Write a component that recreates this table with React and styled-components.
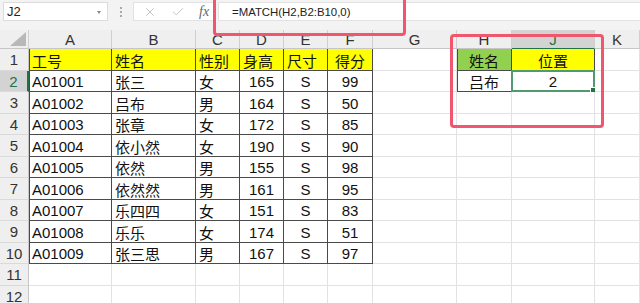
import React from "react";
import styled, { createGlobalStyle } from "styled-components";
import { X, Check } from "lucide-react";

const GlobalStyle = createGlobalStyle`
  body {
    margin: 0;
    background: #fff;
    overflow: hidden;
    font-family: "Liberation Sans", "Noto Sans CJK SC", sans-serif;
  }
`;

const cols = ["A", "B", "C", "D", "E", "F", "G", "H", "J", "K"];

const rows = [
  ["A01001", "张三", "女", "165", "S", "99"],
  ["A01002", "吕布", "男", "164", "S", "50"],
  ["A01003", "张章", "女", "172", "S", "85"],
  ["A01004", "依小然", "女", "190", "S", "90"],
  ["A01005", "依然", "男", "155", "S", "98"],
  ["A01006", "依然然", "男", "161", "S", "95"],
  ["A01007", "乐四四", "女", "151", "S", "83"],
  ["A01008", "乐乐", "女", "174", "S", "51"],
  ["A01009", "张三思", "男", "167", "S", "97"],
];

const head = ["工号", "姓名", "性别", "身高", "尺寸", "得分"];

const Page = styled.div`
  position: relative;
  width: 640px;
  height: 303px;
  overflow: hidden;
`;

const Toolbar = styled.div`
  display: flex;
  align-items: flex-start;
  height: 30px;
  box-sizing: border-box;
  padding: 2px 0 0 3px;
  background: #f3f3f3;
`;

const NameBox = styled.div`
  position: relative;
  width: 105px;
  height: 19px;
  box-sizing: border-box;
  border: 1px solid #dcdcdc;
  background: #fff;
  font-size: 13px;
  color: #222;
  padding-left: 3px;
  line-height: 17px;
  &::after {
    content: "";
    position: absolute;
    right: 6px;
    top: 8px;
    border: 2.5px solid transparent;
    border-top: 3px solid #888;
  }
`;

const Grip = styled.div`
  width: 25px;
  height: 19px;
  display: flex;
  flex-direction: column;
  align-items: center;
  justify-content: center;
  gap: 2px;
  span {
    width: 2px;
    height: 2px;
    background: #aaa;
  }
`;

const FxControls = styled.div`
  display: flex;
  align-items: center;
  width: 82px;
  height: 19px;
  box-sizing: border-box;
  background: #fff;
  border: 1px solid #e2e2e2;
  padding-left: 9px;
  gap: 14px;
  color: #b4b4b4;
`;

const Fx = styled.span`
  font-family: "Liberation Serif", serif;
  font-style: italic;
  font-size: 14px;
  color: #666;
`;

const Formula = styled.div`
  flex: 1;
  height: 19px;
  margin-left: 3px;
  box-sizing: border-box;
  background: #fff;
  border: 1px solid #e2e2e2;
  border-right: none;
  padding-left: 13px;
  font-size: 11.4px;
  line-height: 18px;
  color: #222;
`;

const Sheet = styled.div`
  display: grid;
  grid-template-columns: 29px 83px 84px 44px 44px 44px 45px 84px 55px 83px 1fr;
  grid-template-rows: 19px repeat(12, 21.5px);
`;

const Corner = styled.div`
  background: #efefef;
  border-right: 1px solid #d0d0d0;
  border-bottom: 1px solid #c6c6c6;
  display: flex;
  align-items: flex-end;
  justify-content: flex-end;
  padding: 0 2px 2px 0;
`;

const ColHead = styled.div`
  display: flex;
  align-items: center;
  justify-content: center;
  font-size: 15px;
  color: ${(p) => (p.$active ? "#217346" : "#333")};
  background: ${(p) => (p.$active ? "#d3d3d3" : "#efefef")};
  border-right: 1px solid #d0d0d0;
  border-bottom: 1px solid ${(p) => (p.$active ? "#217346" : "#c6c6c6")};
`;

const RowHead = styled.div`
  display: flex;
  align-items: center;
  justify-content: center;
  padding-top: 1px;
  font-size: 15px;
  color: ${(p) => (p.$active ? "#217346" : "#333")};
  background: ${(p) => (p.$active ? "#d3d3d3" : "#efefef")};
  border-right: ${(p) => (p.$active ? "2px solid #217346" : "1px solid #c6c6c6")};
  border-bottom: 1px solid #dadada;
`;

const Cell = styled.div`
  position: relative;
  display: flex;
  align-items: center;
  justify-content: ${(p) => (p.$center ? "center" : "flex-start")};
  padding: 2px 3px 0;
  white-space: nowrap;
  font-size: 15px;
  color: #111;
  background: ${(p) => p.$bg || "#fff"};
  border-right: 1px solid ${(p) => (p.$dark ? "#4a4a4a" : "#e2e2e2")};
  border-bottom: 1px solid ${(p) => (p.$dark ? "#4a4a4a" : "#e2e2e2")};
  box-shadow: ${(p) => (p.$edge ? "inset 1px 0 0 #4a4a4a" : "none")};
`;

const Selection = styled.div`
  position: absolute;
  left: -1px;
  top: -1px;
  right: -1px;
  bottom: -1px;
  border: 2px solid #4f9a6e;
  pointer-events: none;
  &::after {
    content: "";
    position: absolute;
    right: -4px;
    bottom: -4px;
    width: 5px;
    height: 5px;
    background: #217346;
    border: 1px solid #fff;
  }
`;

const Mark = styled.div`
  position: absolute;
  border: 3px solid #f0566e;
  border-radius: 4px;
  pointer-events: none;
  left: ${(p) => p.$x}px;
  top: ${(p) => p.$y}px;
  width: ${(p) => p.$w}px;
  height: ${(p) => p.$h}px;
  box-sizing: border-box;
`;

function rowCells(r) {
  // r is the sheet row number, 1-based
  const out = [];
  const inTable = r <= 10;
  for (let c = 0; c < cols.length; c++) {
    let text = "";
    let bg;
    let center = false;
    let dark = false;
    let edge = false;
    let selected = false;
    if (inTable && c < 6) {
      dark = true;
      edge = c === 0;
      if (r === 1) {
        text = head[c];
        bg = "#ffff00";
        center = c === 5;
      } else {
        text = rows[r - 2][c];
        center = c >= 3;
      }
    }
    if (r <= 2 && (c === 7 || c === 8)) {
      dark = true;
      edge = c === 7;
      center = true;
      if (r === 1) {
        text = c === 7 ? "姓名" : "位置";
        bg = c === 7 ? "#92d050" : "#ffff00";
      } else {
        text = c === 7 ? "吕布" : "2";
        selected = c === 8;
      }
    }
    out.push(
      <Cell key={c} $bg={bg} $center={center} $dark={dark} $edge={edge}>
        {text}
        {selected && <Selection />}
      </Cell>
    );
  }
  return out;
}

export default function App() {
  return (
    <Page>
      <GlobalStyle />
      <Toolbar>
        <NameBox>J2</NameBox>
        <Grip>
          <span />
          <span />
          <span />
        </Grip>
        <FxControls>
          <X size={14} strokeWidth={1.3} />
          <Check size={14} strokeWidth={1.3} />
          <Fx>fx</Fx>
        </FxControls>
        <Formula>=MATCH(H2,B2:B10,0)</Formula>
      </Toolbar>
      <Sheet>
        <Corner>
          <svg width="16" height="14" viewBox="0 0 16 14">
            <polygon points="16,0 16,14 0,14" fill="#b8b8b8" />
          </svg>
        </Corner>
        {cols.map((c) => (
          <ColHead key={c} $active={c === "J"}>
            {c}
          </ColHead>
        ))}
        {Array.from({ length: 12 }, (_, i) => (
          <React.Fragment key={i}>
            <RowHead $active={i === 1}>{i + 1}</RowHead>
            {rowCells(i + 1)}
          </React.Fragment>
        ))}
      </Sheet>
      <Mark $x={213} $y={-10} $w={193} $h={46} />
      <Mark $x={450} $y={34} $w={154} $h={94} />
    </Page>
  );
}
